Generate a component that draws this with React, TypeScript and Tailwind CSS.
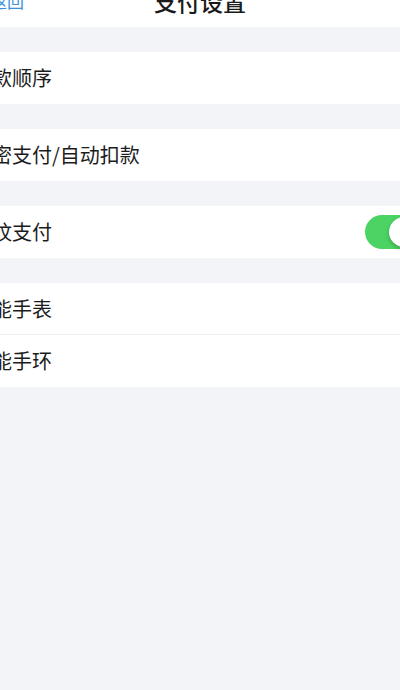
import React from "react";

const font = { fontFamily: '"Noto Sans CJK SC", "Noto Sans", sans-serif' };

function Row({ label, right, border }: { label: string; right?: React.ReactNode; border?: boolean }) {
  return (
    <div className={"h-[52px] bg-white flex items-center justify-between pl-[8px] pr-[15px]" + (border ? " border-b border-[#eeeeee]" : "")}>
      <span className="text-[20px] leading-none text-[#1c1c1c]">{label}</span>
      {right}
    </div>
  );
}

function Toggle() {
  return (
    <div className="w-[56px] h-[34px] rounded-full bg-[#4bd463] flex items-center justify-end pr-[2px]">
      <div className="w-[30px] h-[30px] rounded-full bg-white shadow-[0_2px_4px_rgba(0,0,0,0.25)]" />
    </div>
  );
}

export default function App() {
  return (
    <div className="w-[400px] h-[690px] overflow-hidden bg-[#f3f4f8]" style={font}>
      <div className="w-[472px] ml-[-36px] flex flex-col">
        <div className="h-[54px] mt-[-27px] bg-white grid grid-cols-[1fr_auto_1fr] items-center">
          <span className="pl-[26px] text-[17px] leading-none text-[#3d8fe0]">返回</span>
          <span className="text-[23px] leading-none font-medium text-[#1a1a1a] pt-[2px]">支付设置</span>
          <span />
        </div>
        <div className="h-[25px]" />
        <Row label="扣款顺序" />
        <div className="h-[25px]" />
        <Row label="免密支付/自动扣款" />
        <div className="h-[25px]" />
        <Row label="指纹支付" right={<Toggle />} />
        <div className="h-[25px]" />
        <Row label="智能手表" border />
        <Row label="智能手环" />
      </div>
    </div>
  );
}
